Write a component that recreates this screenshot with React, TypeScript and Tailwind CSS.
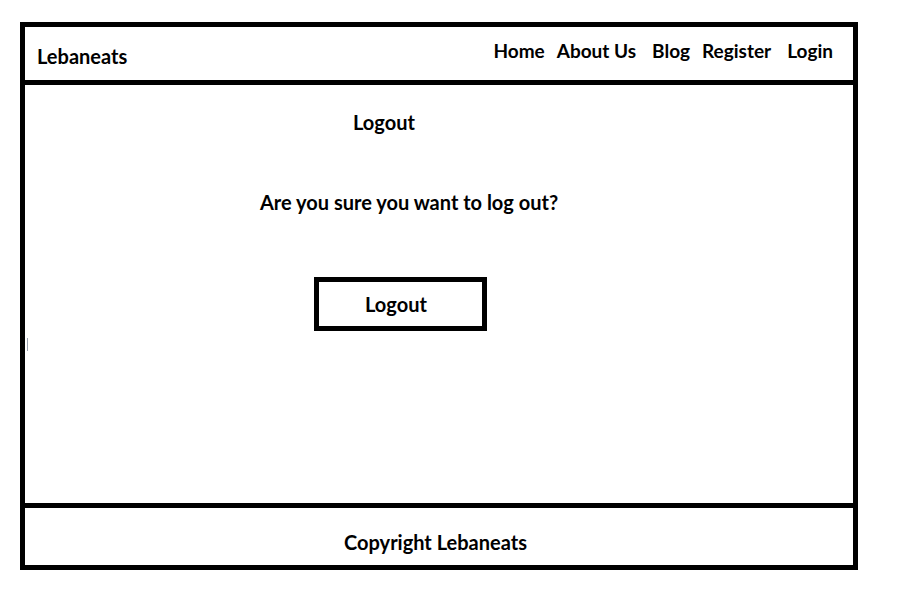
export default function App() {
    const navItems = [
        { label: 'Home', cls: '' },
        { label: 'About Us', cls: 'ml-[12px]' },
        { label: 'Blog', cls: 'ml-[16px]' },
        { label: 'Register', cls: 'ml-[12px]' },
        { label: 'Login', cls: 'ml-[16px]' },
    ];

    return (
        <div className="bg-white min-h-screen w-[910px] h-[607px] pt-[22px] pl-[20px] text-black font-['Lato','Liberation_Sans',sans-serif] font-bold text-[20px] leading-[22px]">
            <div className="w-[838px] h-[548px] border-[5px] border-black flex flex-col">
                {/* header */}
                <header className="h-[58px] shrink-0 border-b-[5px] border-black flex items-start">
                    <div className="pl-[12px] pt-[18px]">Lebaneats</div>
                    <nav className="ml-auto pr-[20px] pt-[13px] flex text-[19px]">
                        {navItems.map((item) => (
                            <a key={item.label} className={item.cls}>
                                {item.label}
                            </a>
                        ))}
                    </nav>
                </header>

                {/* main */}
                <main className="h-[423px] shrink-0 border-b-[5px] border-black flex flex-col">
                    <h1 className="pl-[328px] pt-[26px]">Logout</h1>
                    <p className="pl-[235px] mt-[58px]">Are you sure you want to log out?</p>
                    <div className="pl-[289px] mt-[64px]">
                        <button className="w-[173px] h-[54px] border-[5px] border-black flex items-center pl-[46px]">
                            Logout
                        </button>
                    </div>
                    <span className="ml-[2px] mt-[7px] w-px h-[13px] bg-gray-400" />
                </main>

                {/* footer */}
                <footer className="flex-1">
                    <p className="pl-[319px] pt-[23px]">Copyright Lebaneats</p>
                </footer>
            </div>
        </div>
    );
}
